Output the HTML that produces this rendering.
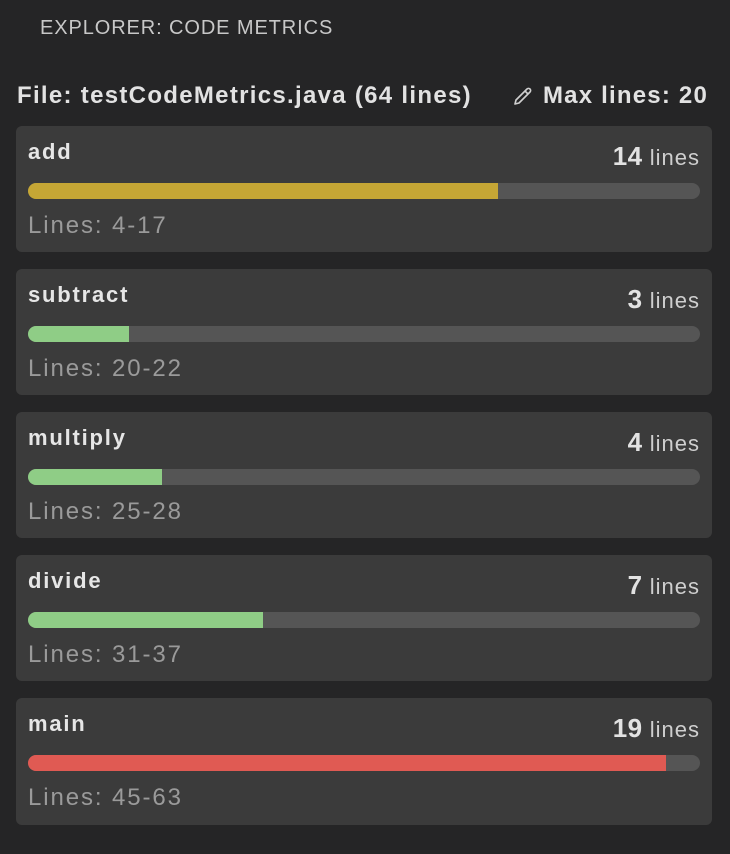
<!DOCTYPE html>
<html><head><style>
body{margin:0;width:730px;height:854px;background:#252526;font-family:"Liberation Sans",sans-serif;color:#e0e0e0;position:relative;overflow:hidden}
.hdr{position:absolute;left:40px;top:17px;font-size:20px;color:#c8c8c8;letter-spacing:0.9px}
.file{position:absolute;left:17px;top:82px;font-size:24px;font-weight:bold;color:#e2e2e2;letter-spacing:1.3px}
.max{position:absolute;right:22px;top:82px;font-size:24px;font-weight:bold;color:#e2e2e2;letter-spacing:1.2px}
.max svg{position:absolute;left:-31px;top:3px}
.card{position:absolute;left:16px;width:696px;height:126px;background:#3b3b3b;border-radius:6px}
.name{position:absolute;left:12px;top:13px;font-size:22px;font-weight:bold;color:#e6e6e6;letter-spacing:1.8px}
.cnt{position:absolute;right:12px;top:15px;font-size:22px;color:#cfcfcf;letter-spacing:1px}
.cnt b{font-size:26px;color:#e2e2e2;letter-spacing:0.5px}
.track{position:absolute;left:12px;top:57px;width:672px;height:16px;background:#555;border-radius:8px;overflow:hidden}
.fill{height:100%}
.rng{position:absolute;left:12px;top:86px;font-size:24px;color:#9a9a9a;letter-spacing:1.9px}
</style></head><body>
<div class="hdr">EXPLORER: CODE METRICS</div>
<div class="file">File: testCodeMetrics.java (64 lines)</div>
<div class="max"><svg width="22" height="22" viewBox="0 0 22 22" fill="none" stroke="#d0d0d0" stroke-width="1.6" stroke-linejoin="round"><path d="M3 19l1-4L15 4a2 2 0 0 1 3 3L7 18z M13 6l3 3"/></svg>Max lines: 20</div>

<div class="card" style="top:126px"><div class="name">add</div><div class="cnt"><b>14</b> lines</div><div class="track"><div class="fill" style="width:470px;background:#c5a635"></div></div><div class="rng">Lines: 4-17</div></div>
<div class="card" style="top:269px"><div class="name">subtract</div><div class="cnt"><b>3</b> lines</div><div class="track"><div class="fill" style="width:101px;background:#8fcd86"></div></div><div class="rng">Lines: 20-22</div></div>
<div class="card" style="top:412px"><div class="name">multiply</div><div class="cnt"><b>4</b> lines</div><div class="track"><div class="fill" style="width:134px;background:#8fcd86"></div></div><div class="rng">Lines: 25-28</div></div>
<div class="card" style="top:555px"><div class="name">divide</div><div class="cnt"><b>7</b> lines</div><div class="track"><div class="fill" style="width:235px;background:#8fcd86"></div></div><div class="rng">Lines: 31-37</div></div>
<div class="card" style="top:698px;height:127px"><div class="name">main</div><div class="cnt"><b>19</b> lines</div><div class="track"><div class="fill" style="width:638px;background:#e05a53"></div></div><div class="rng">Lines: 45-63</div></div>
</body></html>
